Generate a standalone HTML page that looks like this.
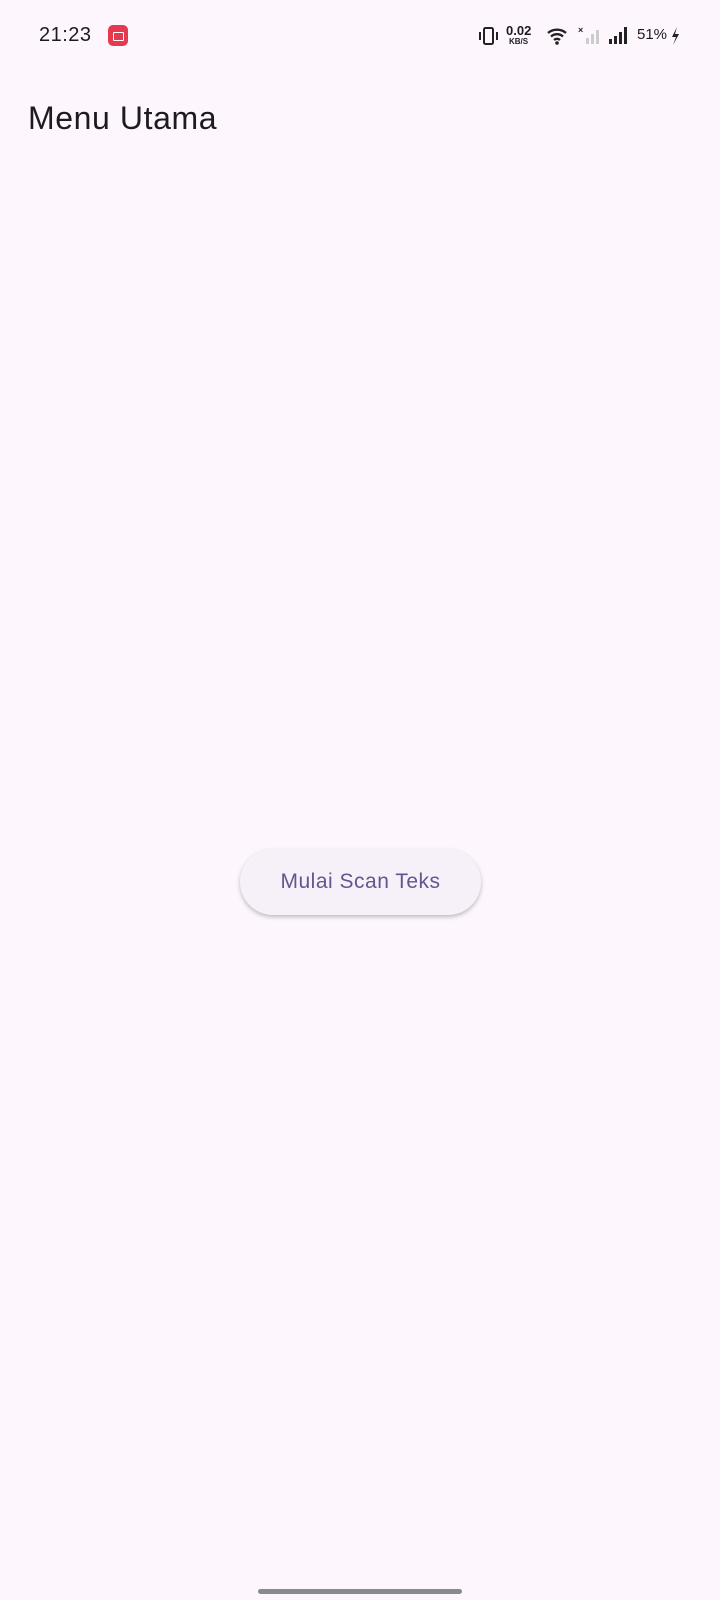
<!DOCTYPE html>
<html><head><meta charset="utf-8"><style>
html,body{margin:0;padding:0;}
body{width:720px;height:1600px;background:#fdf7fd;position:relative;overflow:hidden;font-family:"Liberation Sans",sans-serif;}
.t{position:absolute;color:#1d1b20;}
.btn{position:absolute;left:240px;top:849px;width:241px;height:66px;border-radius:33px;background:#f6f0f8;box-shadow:0 2px 4px rgba(0,0,0,0.25);display:flex;align-items:center;justify-content:center;color:#65558f;font-size:21px;letter-spacing:0.5px;}
</style></head><body>
<div class="t" style="left:39px;top:24px;font-size:20px;letter-spacing:0.5px;">21:23</div>
<div style="position:absolute;left:108px;top:25px;width:20px;height:21px;border-radius:5px;background:#e53950;"><div style="position:absolute;left:5px;top:7px;width:9px;height:7px;border:1.3px solid #fff;border-radius:1px;"></div></div>
<svg style="position:absolute;left:478px;top:26px" width="22" height="20"><rect x="6" y="2" width="9" height="16" rx="1.5" fill="none" stroke="#222" stroke-width="2"/><path d="M2 6v8M19 6v8" stroke="#222" stroke-width="2"/></svg>
<div class="t" style="left:506px;top:23px;font-size:13px;font-weight:bold;">0.02</div>
<div class="t" style="left:509px;top:37px;font-size:8px;font-weight:bold;">KB/S</div>
<svg style="position:absolute;left:546px;top:26px" width="24" height="20"><path d="M2 7a14 14 0 0 1 18 0M5 10.5a9 9 0 0 1 12 0M8 14a4.5 4.5 0 0 1 6 0" fill="none" stroke="#222" stroke-width="2.4"/><circle cx="11" cy="17" r="1.8" fill="#222"/></svg>
<svg style="position:absolute;left:578px;top:24px" width="22" height="22"><text x="0" y="9" font-size="9" font-weight="bold" fill="#222">×</text><rect x="8" y="14" width="3" height="6" fill="#ccc"/><rect x="13" y="10" width="3" height="10" fill="#ccc"/><rect x="18" y="6" width="3" height="14" fill="#ccc"/></svg>
<svg style="position:absolute;left:608px;top:24px" width="22" height="22"><rect x="1" y="15" width="3" height="5" fill="#222"/><rect x="6" y="12" width="3" height="8" fill="#222"/><rect x="11" y="8" width="3" height="12" fill="#222"/><rect x="16" y="3" width="3" height="17" fill="#222"/></svg>
<div class="t" style="left:637px;top:26px;font-size:15px;">51%</div>
<svg style="position:absolute;left:670px;top:26px" width="10" height="20"><path d="M7 1L2 11h4l-3 8 6-11H5z" fill="#222"/></svg>
<div class="t" style="left:28px;top:100px;font-size:32px;letter-spacing:0.6px;">Menu Utama</div>
<div class="btn">Mulai Scan Teks</div>
<div style="position:absolute;left:258px;top:1589px;width:204px;height:5px;border-radius:3px;background:#8a8a8e;"></div>
</body></html>
